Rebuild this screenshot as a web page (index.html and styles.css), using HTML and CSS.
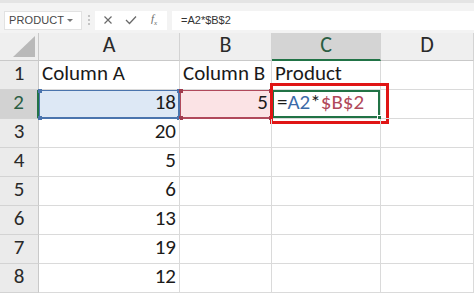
FILE: index.html
```html
<!DOCTYPE html>
<html>
<head>
<meta charset="utf-8">
<link rel="stylesheet" href="styles.css">
</head>
<body>
<div class="app">
  <div class="toolbar">
    <div class="namebox"><span class="name">PRODUCT</span><span class="caret"></span></div>
    <div class="grip"><i></i><i></i><i></i></div>
    <div class="btns">
      <svg class="ic" width="10" height="10" viewBox="0 0 10 10"><path d="M1.5 1.5 L8.5 8.5 M8.5 1.5 L1.5 8.5" stroke="#6a6a6a" stroke-width="1.2" fill="none"/></svg>
      <svg class="ic" width="12" height="10" viewBox="0 0 12 10"><path d="M1 5 L4.5 8.5 L11 1.5" stroke="#6a6a6a" stroke-width="1.3" fill="none"/></svg>
      <span class="fx"><i>f</i><sub>x</sub></span>
    </div>
    <div class="formula">=A2*$B$2</div>
  </div>
  <div class="sheet">
    <div class="corner"><span class="tri"></span></div>
    <div class="ch">A</div>
    <div class="ch">B</div>
    <div class="ch sel">C</div>
    <div class="ch">D</div>

    <div class="rh">1</div>
    <div class="c">Column A</div>
    <div class="c">Column B</div>
    <div class="c">Product</div>
    <div class="c"></div>

    <div class="rh sel">2</div>
    <div class="c num refa">18<span class="k k1"></span><span class="k k2"></span><span class="k k3"></span><span class="k k4"></span></div>
    <div class="c num refb">5<span class="k k1"></span><span class="k k2"></span><span class="k k3"></span><span class="k k4"></span></div>
    <div class="c active">=<span class="ra">A2</span>*<span class="rb">$B$2</span><span class="redbox"></span><span class="handle"></span></div>
    <div class="c"></div>

    <div class="rh">3</div><div class="c num">20</div><div class="c"></div><div class="c"></div><div class="c"></div>
    <div class="rh">4</div><div class="c num">5</div><div class="c"></div><div class="c"></div><div class="c"></div>
    <div class="rh">5</div><div class="c num">6</div><div class="c"></div><div class="c"></div><div class="c"></div>
    <div class="rh">6</div><div class="c num">13</div><div class="c"></div><div class="c"></div><div class="c"></div>
    <div class="rh">7</div><div class="c num">19</div><div class="c"></div><div class="c"></div><div class="c"></div>
    <div class="rh">8</div><div class="c num">12</div><div class="c"></div><div class="c"></div><div class="c"></div>
  </div>
</div>
</body>
</html>
```
FILE: styles.css
```css
* { box-sizing: border-box; }
html, body { margin: 0; padding: 0; }
body { width: 474px; height: 294px; overflow: hidden; background: #ffffff; font-family: "Carlito", "Liberation Sans", Arial, sans-serif; }
.app { width: 474px; height: 294px; display: flex; flex-direction: column; }

.toolbar { height: 33px; background: #f3f3f3; border-top: 3px solid #e4e4e4; display: flex; align-items: center; padding: 4px 0 0 4px; }
.namebox { width: 78px; height: 19px; background: #fff; border: 1px solid #e2e2e2; display: flex; align-items: center; padding-left: 4px; position: relative; }
.name { font-family: "Liberation Sans", Arial, sans-serif; font-size: 11px; color: #474747; letter-spacing: 0.1px; }
.caret { position: absolute; left: 62px; top: 7px; width: 0; height: 0; border-left: 3px solid transparent; border-right: 3px solid transparent; border-top: 3px solid #777; }
.grip { width: 13px; height: 19px; display: flex; flex-direction: column; align-items: center; justify-content: center; gap: 2px; }
.grip i { width: 2px; height: 2px; background: #c4c4c4; display: block; }
.btns { width: 72px; height: 19px; background: #fff; display: flex; align-items: center; padding-left: 8px; gap: 12px; }
.ic { display: block; }
.fx { font-family: "Liberation Serif", serif; font-size: 11px; color: #6a6a6a; margin-left: 2px; }
.fx sub { font-size: 7px; font-style: italic; }
.formula { flex: 1; height: 19px; background: #fff; margin-left: 5px; display: flex; align-items: center; padding-left: 9px; font-family: "Liberation Sans", Arial, sans-serif; font-size: 11px; color: #333; }

.sheet { display: grid; grid-template-columns: 39px 141px 92px 109px 93px; grid-template-rows: 28px repeat(8, 29px); font-size: 21px; color: #1a1a1a; }
.corner { background: #efefef; border-right: 1px solid #c9c9c9; border-bottom: 1px solid #c9c9c9; position: relative; }
.tri { position: absolute; right: 3px; bottom: 3px; width: 0; height: 0; border-left: 22px solid transparent; border-bottom: 21px solid #b9b9b9; }
.ch { background: #efefef; border-right: 1px solid #d3d3d3; border-bottom: 1px solid #c9c9c9; display: flex; align-items: flex-end; justify-content: center; padding-bottom: 2px; font-size: 22px; color: #2a2a2a; }
.ch.sel { background: #d4d4d4; border-bottom: 2px solid #217346; padding-bottom: 1px; color: #2b5e43; }
.rh { background: #ebebeb; border-right: 1px solid #c9c9c9; border-bottom: 1px solid #d3d3d3; display: flex; align-items: flex-end; justify-content: center; padding-bottom: 3px; font-size: 21px; color: #2a2a2a; }
.rh.sel { background: #d2d2d2; border-right: 2px solid #217346; color: #2b5e43; }
.c { border-right: 1px solid #dadada; border-bottom: 1px solid #dadada; display: flex; align-items: flex-end; padding: 0 3px 3px 3px; white-space: nowrap; position: relative; }
.num { justify-content: flex-end; }
.refa { background: #dde8f5; box-shadow: inset 0 0 0 1px #4a74ad; border-color: #4a74ad; }
.refb { background: #fbe3e5; box-shadow: inset 0 0 0 1px #b0495b; border-color: #b0495b; }
.k { position: absolute; width: 4px; height: 4px; }
.refa .k { background: #4a74ad; }
.refb .k { background: #a03a4c; }
.k1 { left: -1px; top: -1px; }
.k2 { right: -2px; top: -1px; }
.k3 { left: -1px; bottom: -2px; }
.k4 { right: -2px; bottom: -2px; }
.active { box-shadow: inset 0 0 0 2px #217346; font-size: 21px; padding-left: 5px; padding-bottom: 3px; }
.ra { color: #3b6aa8; }
.rb { color: #b0485a; }
.redbox { position: absolute; left: -2px; top: -7px; right: -9px; bottom: -6px; border: 3px solid #e01515; }
.handle { position: absolute; right: -2px; bottom: -2px; width: 5px; height: 5px; background: #217346; border: 1px solid #fff; }
```
